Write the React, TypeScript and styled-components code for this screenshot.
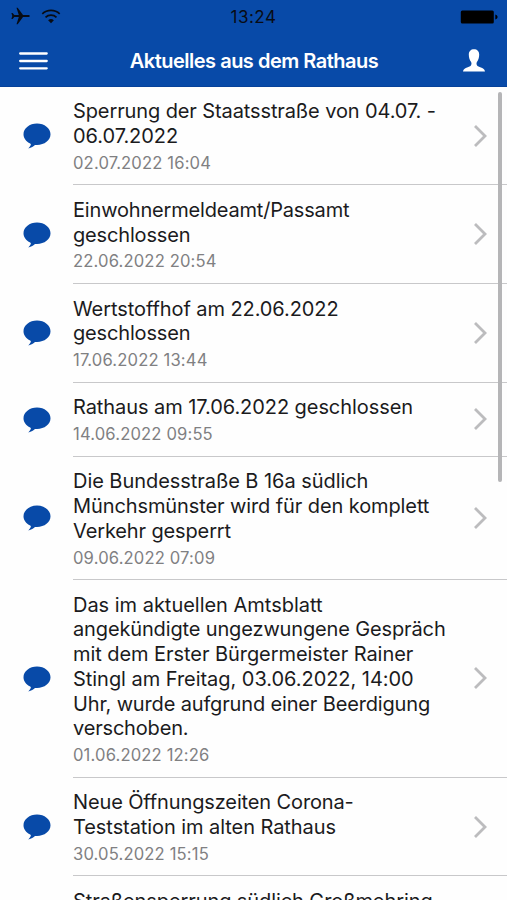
import React from "react";
import styled, { createGlobalStyle } from "styled-components";

const BLUE = "#084aa8";

const GlobalStyle = createGlobalStyle`
  * { box-sizing: border-box; }
  body { margin: 0; background: #fefefe; font-family: Inter, "Liberation Sans", sans-serif; }
`;

const Screen = styled.main`
  position: relative;
  width: 507px;
  height: 900px;
  display: flex;
  flex-direction: column;
  overflow: hidden;
  background: #fefefe;
`;

const Header = styled.header`
  height: 87px;
  flex: none;
  background: ${BLUE};
  border-bottom: 1px solid #07429a;
`;

const StatusBar = styled.div`
  height: 34px;
  display: grid;
  grid-template-columns: 1fr auto 1fr;
  align-items: center;
  padding: 0 8px 0 11px;
  color: #080c14;
`;

const StatusIcons = styled.div`
  display: flex;
  align-items: center;
  gap: 11px;
  margin-top: -2px;
`;

const Clock = styled.time`
  font-size: 17px;
  line-height: 34px;
  letter-spacing: 0.5px;
  margin-left: -3px;
`;

const BatteryHolder = styled.div`
  display: flex;
  justify-content: flex-end;
  margin-top: -1px;
`;

const NavBar = styled.div`
  height: 53px;
  display: grid;
  grid-template-columns: 60px 1fr 60px;
  align-items: center;
  color: #fff;
`;

const NavButton = styled.button<{ $side: "start" | "end" }>`
  display: flex;
  justify-content: ${(p) => (p.$side === "start" ? "flex-start" : "flex-end")};
  padding: ${(p) => (p.$side === "start" ? "1px 0 0 19px" : "0 22px 0 0")};
  border: 0;
  background: none;
  color: inherit;
`;

const Title = styled.h1`
  margin: 0;
  padding-left: 1px;
  text-align: center;
  font-size: 20px;
  font-weight: 600;
  letter-spacing: -0.5px;
  white-space: nowrap;
`;

const List = styled.ul`
  list-style: none;
  margin: -0.5px 0 0;
  padding: 0;
`;

const Row = styled.li`
  display: grid;
  grid-template-columns: 73px 1fr;
`;

const IconCell = styled.div`
  display: flex;
  align-items: center;
  padding-left: 23px;
`;

const RowBody = styled.div`
  display: flex;
  align-items: center;
  justify-content: space-between;
  padding: 12.8px 19px 10.4px 0;
  border-bottom: 1px solid #c8c8ca;
`;

const Headline = styled.div`
  color: #1b1b1d;
  font-size: 20px;
  line-height: 24.75px;
  white-space: nowrap;
`;

const Line = styled.span<{ $tracking: number }>`
  display: block;
  letter-spacing: ${(p) => p.$tracking}px;
`;

const Stamp = styled.time`
  display: block;
  height: 25px;
  line-height: 28px;
  font-size: 16.6px;
  letter-spacing: 0.15px;
  color: #808082;
`;

const Chevron = styled.svg`
  flex: none;
  margin-top: -2px;
`;

const NextRow = styled.li`
  padding: 12.8px 0 0 73px;
`;

const ScrollThumb = styled.div`
  position: absolute;
  top: 92px;
  right: 5px;
  width: 4px;
  height: 390px;
  border-radius: 2px;
  background: #b5b5b7;
`;

type TextLine = [text: string, tracking: number];
type Entry = { lines: TextLine[]; date: string };

const entries: Entry[] = [
  { lines: [["Sperrung der Staatsstraße von 04.07. -", -0.11], ["06.07.2022", -0.05]], date: "02.07.2022 16:04" },
  { lines: [["Einwohnermeldeamt/Passamt", -0.18], ["geschlossen", -0.17]], date: "22.06.2022 20:54" },
  { lines: [["Wertstoffhof am 22.06.2022", -0.08], ["geschlossen", -0.17]], date: "17.06.2022 13:44" },
  { lines: [["Rathaus am 17.06.2022 geschlossen", -0.07]], date: "14.06.2022 09:55" },
  {
    lines: [
      ["Die Bundesstraße B 16a südlich", -0.05],
      ["Münchsmünster wird für den komplett", -0.1],
      ["Verkehr gesperrt", -0.13],
    ],
    date: "09.06.2022 07:09",
  },
  {
    lines: [
      ["Das im aktuellen Amtsblatt", -0.02],
      ["angekündigte ungezwungene Gespräch", -0.14],
      ["mit dem Erster Bürgermeister Rainer", -0.06],
      ["Stingl am Freitag, 03.06.2022, 14:00", -0.04],
      ["Uhr, wurde aufgrund einer Beerdigung", -0.15],
      ["verschoben.", -0.18],
    ],
    date: "01.06.2022 12:26",
  },
  { lines: [["Neue Öffnungszeiten Corona-", -0.13], ["Teststation im alten Rathaus", -0.07]], date: "30.05.2022 15:15" },
];

const nextHeadline: TextLine = ["Straßensperrung südlich Großmehring", -0.09];

const Plane = () => (
  <svg width="19" height="18" viewBox="0 0 19 18" fill="currentColor">
    <path d="M18.8 9c0-.6-.8-1-1.800-1h-5L6.700.8H5.500L7.800 8H3.300L1.600 5.900H.4L1.300 9 .4 12.100h1.200L3.300 10h4.500l-2.300 7.200h1.200L12 10h5c1 0 1.800-.4 1.800-1Z" />
  </svg>
);

const Wifi = () => (
  <svg width="20" height="15" viewBox="0 0 20 15" fill="none" stroke="currentColor" strokeWidth="1.7">
    <path d="M1.300 4.800a12.600 12.600 0 0 1 17.400 0M4.500 8.300a8 8 0 0 1 11 0" />
    <path d="M10 14.200 7.100 11.300a4.200 4.200 0 0 1 5.800 0Z" fill="currentColor" stroke="none" />
  </svg>
);

const Battery = () => (
  <svg width="39" height="16" viewBox="0 0 39 16" fill="#000">
    <rect x="0.8" y="1.5" width="33" height="13" rx="1.5" />
    <path d="M35.300 5.500c3 .7 3 4.300 0 5Z" />
  </svg>
);

const Menu = () => (
  <svg width="29" height="18" viewBox="0 0 29 18" stroke="currentColor" strokeWidth="2.3" strokeLinecap="round">
    <path d="M1.200 1.500h26.500M1.200 9h26.500M1.200 16.300h26.500" />
  </svg>
);

const Person = () => (
  <svg width="22" height="23" viewBox="0 0 22 23" fill="currentColor">
    <path d="M11 .3C7.900.3 5.800 2.300 5.800 5.600c0 3.300.9 5.800 2.300 7.500.7 1.200.5 2.900-.6 3.800-1.200.9-3 1.300-4.700 2C1.100 19.700.2 20.900 0 22.500h22c-.2-1.600-1.100-2.800-2.800-3.600-1.700-.7-3.500-1.100-4.700-2-1.100-.9-1.300-2.600-.6-3.800 1.400-1.700 2.300-4.200 2.300-7.500C16.200 2.300 14.100.3 11 .3Z" />
  </svg>
);

const Bubble = () => (
  <svg width="28" height="26" viewBox="0 0 28 26" fill={BLUE}>
    <path d="M14 .5C6.500.5.5 5.300.5 11.300c0 3.900 2.500 7.200 6.700 9.200.8.500.8 1.200.3 2-.5.900-1.300 1.900-2.200 2.900 3.100-.7 5.300-2 6.700-3.500l2 .1c7.500 0 13.500-4.700 13.500-10.700S21.500.5 14 .5Z" />
  </svg>
);

export default function App() {
  return (
    <>
      <GlobalStyle />
      <Screen>
        <Header>
          <StatusBar>
            <StatusIcons>
              <Plane />
              <Wifi />
            </StatusIcons>
            <Clock>13:24</Clock>
            <BatteryHolder>
              <Battery />
            </BatteryHolder>
          </StatusBar>
          <NavBar>
            <NavButton $side="start" aria-label="Menü">
              <Menu />
            </NavButton>
            <Title>Aktuelles aus dem Rathaus</Title>
            <NavButton $side="end" aria-label="Profil">
              <Person />
            </NavButton>
          </NavBar>
        </Header>
        <List>
          {entries.map((entry) => (
            <Row key={entry.date}>
              <IconCell>
                <Bubble />
              </IconCell>
              <RowBody>
                <div>
                  <Headline>
                    {entry.lines.map(([text, tracking]) => (
                      <Line key={text} $tracking={tracking}>
                        {text}
                      </Line>
                    ))}
                  </Headline>
                  <Stamp>{entry.date}</Stamp>
                </div>
                <Chevron width="15" height="24" viewBox="0 0 15 24" fill="none" stroke="#bcbcbe" strokeWidth="2.8">
                  <path d="M2 2l10 10L2 22" />
                </Chevron>
              </RowBody>
            </Row>
          ))}
          <NextRow>
            <Headline>
              <Line $tracking={nextHeadline[1]}>{nextHeadline[0]}</Line>
            </Headline>
          </NextRow>
        </List>
        <ScrollThumb />
      </Screen>
    </>
  );
}
